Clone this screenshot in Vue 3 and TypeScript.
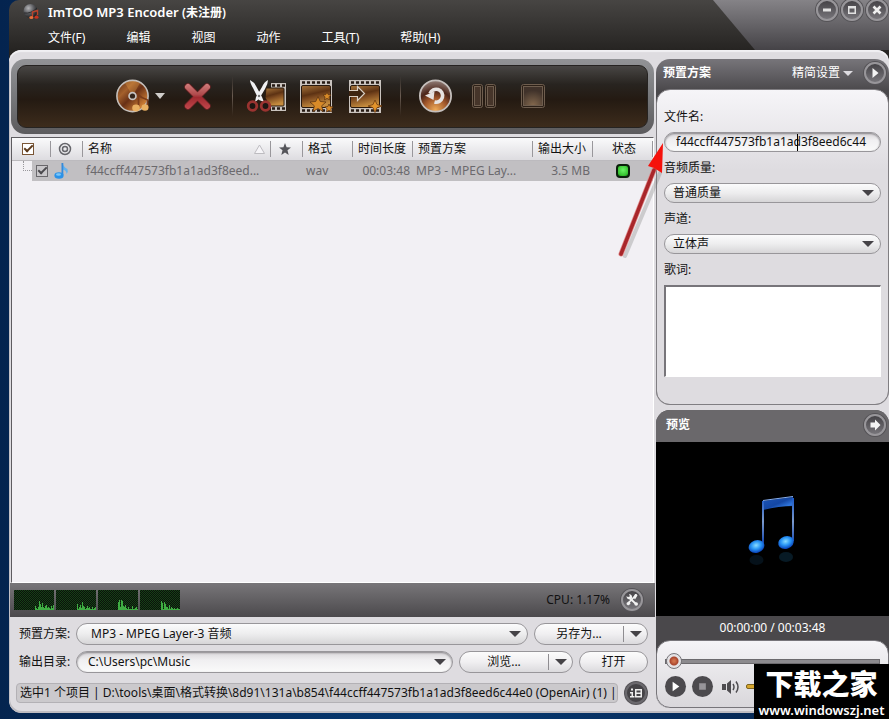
<script setup lang="ts">
import { ref } from 'vue'

interface MenuEntry { label: string }
interface Track {
  name: string
  format: string
  duration: string
  profile: string
  size: string
  checked: boolean
}

const menus: MenuEntry[] = [
  { label: '文件(F)' },
  { label: '编辑' },
  { label: '视图' },
  { label: '动作' },
  { label: '工具(T)' },
  { label: '帮助(H)' },
]

const tracks = ref<Track[]>([
  {
    name: 'f44ccff447573fb1a1ad3f8eed...',
    format: 'wav',
    duration: '00:03:48',
    profile: 'MP3 - MPEG Lay...',
    size: '3.5 MB',
    checked: true,
  },
])

const allChecked = ref(true)
const fileName = ref('f44ccff447573fb1a1ad3f8eed6c44')
const outputDir = ref('C:\\Users\\pc\\Music')
const lyrics = ref('')
const position = ref(0)
const volume = ref(60)
const statusText =
  '选中1 个项目 | D:\\tools\\桌面\\格式转换\\8d91\\131a\\b854\\f44ccff447573fb1a1ad3f8eed6c44e0 (OpenAir) (1) |'

const cpuCores: number[][] = [
  [0, 4, 2, 0, 3, 9, 6, 3, 7, 3, 2, 4, 5, 2, 3, 2, 1, 4, 2, 5],
  [0, 6, 1, 3, 5, 2, 8, 4, 3, 1, 2, 4, 2, 3, 1, 1, 3, 1, 2, 3],
  [8, 10, 3, 10, 9, 4, 3, 5, 2, 1, 3, 1, 1, 1, 4, 1, 1, 2, 3, 1],
  [0, 9, 7, 1, 8, 6, 3, 3, 1, 5, 1, 3, 2, 1, 2, 1, 1, 2, 1, 1],
]
</script>

<template>
  <div class="desktop">
    <div class="window">
      <header class="titlebar">
        <div class="title-row">
          <svg class="app-icon" viewBox="0 0 18 18" aria-hidden="true">
            <defs>
              <radialGradient id="ball" cx=".35" cy=".3" r=".8">
                <stop offset="0" stop-color="#b5b5b8" /><stop offset=".5" stop-color="#55565a" /><stop offset="1" stop-color="#111" />
              </radialGradient>
            </defs>
            <circle cx="7.500" cy="8" r="7" fill="url(#ball)" />
            <path d="M1 10 Q8 11 14 5" stroke="#222" fill="none" stroke-width=".8" />
            <path d="M9.500 14V9l5-1.500V12" stroke="#b8432b" stroke-width="1.400" fill="none" />
            <ellipse cx="8.300" cy="14.500" rx="2" ry="1.600" fill="#e8703a" /><ellipse cx="13.500" cy="14.200" rx="2" ry="1.600" fill="#c8321e" />
          </svg>
          <h1>ImTOO MP3 Encoder <small>(未注册)</small></h1>
          <div class="window-buttons">
            <button class="round" aria-label="最小化"><svg viewBox="0 0 22 22"><path d="M7 9.500h8v3H7z" fill="#e2e2e2" /></svg></button>
            <button class="round" aria-label="最大化"><svg viewBox="0 0 22 22"><path d="M7 7h8v8H7zM8.500 9.500v4h5v-4z" fill="#e2e2e2" fill-rule="evenodd" /></svg></button>
            <button class="round" aria-label="关闭"><svg viewBox="0 0 22 22"><path d="M7.500 7.500l7 7m0-7l-7 7" stroke="#efefef" stroke-width="2.600" /></svg></button>
          </div>
        </div>
        <nav class="menu">
          <button v-for="m in menus" :key="m.label">{{ m.label }}</button>
        </nav>
      </header>

      <div class="body">
        <main class="left">
          <div class="toolbar">
            <div class="toolbar-inner">
              <button class="tool" aria-label="添加文件">
                <svg width="36" height="36" viewBox="0 0 36 36">
                  <defs>
                    <linearGradient id="disc" x1="0" y1="0" x2="1" y2="1">
                      <stop offset="0" stop-color="#5a2c14" /><stop offset=".3" stop-color="#a4602c" /><stop offset=".5" stop-color="#683016" /><stop offset=".8" stop-color="#c97b34" /><stop offset="1" stop-color="#7a421f" />
                    </linearGradient>
                  </defs>
                  <circle cx="16.500" cy="18" r="15.600" fill="url(#disc)" stroke="#c4bfbb" stroke-width="1.600" />
                  <path d="M16.500 18L9 5Q16 1 24 5z" fill="#f0a850" opacity=".3" />
                  <circle cx="16.500" cy="18" r="4.300" fill="#c8c4c2" /><circle cx="16.500" cy="18" r="2.600" fill="#33251c" />
                  <path d="M22.500 29V17q3 3 7 4l2 1v8" fill="none" stroke="#7a3c1a" stroke-width="1.800" />
                  <ellipse cx="20" cy="30" rx="3.800" ry="3.400" fill="#e9b062" /><ellipse cx="29" cy="29.500" rx="3.500" ry="3.300" fill="#e9b062" />
                </svg>
              </button>
              <button class="tool-drop" aria-label="更多添加方式"><svg width="10" height="6" viewBox="0 0 10 6"><path d="M0 0h10L5 6z" fill="#d0cdca" /></svg></button>
              <button class="tool" aria-label="删除">
                <svg width="30" height="30" viewBox="0 0 30 30">
                  <defs><linearGradient id="del" x1="0" y1="0" x2="0" y2="30" gradientUnits="userSpaceOnUse"><stop offset="0" stop-color="#d88a88" /><stop offset=".45" stop-color="#b04a4c" /><stop offset=".55" stop-color="#a02a30" /><stop offset="1" stop-color="#c64c50" /></linearGradient></defs>
                  <path d="M6 6l19 19M25 6L6 25" stroke="#5d2020" stroke-width="7.500" stroke-linecap="round" />
                  <path d="M6 6l19 19M25 6L6 25" stroke="url(#del)" stroke-width="6" stroke-linecap="round" />
                </svg>
              </button>
              <span class="sep"></span>
              <button class="tool" aria-label="剪辑">
                <svg width="42" height="36" viewBox="0 0 42 36">
                  <defs>
                    <linearGradient id="film" x1="0" y1="0" x2=".3" y2="1">
                      <stop offset="0" stop-color="#a8763c" /><stop offset=".45" stop-color="#5d3213" /><stop offset=".6" stop-color="#7d4a20" /><stop offset="1" stop-color="#c58c3e" />
                    </linearGradient>
                  </defs>
                  <path d="M25 5h15v28H25z" fill="#c9c3be" />
                  <path d="M26 7.500h14M26 30.500h14" stroke="#251a13" stroke-width="2.600" stroke-dasharray="3 2" />
                  <path d="M20 10h17q1 0 1 1v16q0 1-1 1H24l-5-8z" fill="url(#film)" stroke="#291a0f" />
                  <path d="M4 2q4 2 6 6l6 11 2 5-5-2-6-12Q4 5 4 2zM22 2q0 4-3 9l-6 10-4 3 1-5 6-10Q18 4 22 2z" fill="#f0f0f2" />
                  <circle cx="13" cy="18" r="1.200" fill="#777" />
                  <circle cx="6.500" cy="28" r="4.300" fill="#1e1713" stroke="#9a3330" stroke-width="2.800" /><circle cx="19.500" cy="28" r="4.300" fill="#1e1713" stroke="#9a3330" stroke-width="2.800" />
                </svg>
              </button>
              <button class="tool" aria-label="特效">
                <svg width="36" height="36" viewBox="0 0 36 36">
                  <path d="M2 2h32v33H2z" fill="#c9c3be" />
                  <path d="M4 4.500h29M4 32.500h29" stroke="#251a13" stroke-width="2.600" stroke-dasharray="3 2" />
                  <rect x="3.500" y="7.500" width="29" height="22" rx="1.500" fill="url(#film)" stroke="#291a0f" />
                  <path d="M20 18.500l2.300 5 5.700.5-4.300 3.800 1.300 5.700-5-3-5 3 1.300-5.700L12 24l5.700-.5zM29 14l1.200 2.600 2.800.3-2 2 .5 3-2.500-1.500-2.500 1.500.5-3-2-2 2.800-.3zM31 26l1.200 2.600 2.800.3-2 2 .5 3-2.500-1.500-2.500 1.500.5-3-2-2 2.800-.3z" fill="#d98b28" stroke="#5d3412" stroke-width=".8" />
                </svg>
              </button>
              <button class="tool" aria-label="添加输出方案">
                <svg width="36" height="36" viewBox="0 0 36 36">
                  <path d="M2 2h32v33H2z" fill="#c9c3be" />
                  <path d="M4 4.500h29M4 32.500h29" stroke="#251a13" stroke-width="2.600" stroke-dasharray="3 2" />
                  <rect x="3.500" y="7.500" width="29" height="22" rx="1.500" fill="url(#film)" stroke="#291a0f" />
                  <path d="M2 12.500h8.500v-4l7 7-7 7v-4H2z" fill="#3d2411" />
                  <path d="M2 12.500h8.500v-4l7 7-7 7v-4H2" fill="none" stroke="#d9cfc4" stroke-width="1.200" />
                  <path d="M28 22l2 4.500 5 1.500-5 1.700-2 4.800-2-4.800-5-1.700 5-1.500z" fill="#e2942c" stroke="#6d3b10" stroke-width=".8" />
                </svg>
              </button>
              <span class="sep"></span>
              <button class="tool" aria-label="转换">
                <svg width="36" height="36" viewBox="0 0 36 36">
                  <defs><radialGradient id="conv" cx=".5" cy=".95" r=".95"><stop offset="0" stop-color="#f0ac58" /><stop offset=".4" stop-color="#a0562a" /><stop offset=".65" stop-color="#4c261a" /><stop offset="1" stop-color="#94807a" /></radialGradient></defs>
                  <circle cx="18.500" cy="18" r="15.600" fill="url(#conv)" stroke="#c4bebb" stroke-width="1.800" />
                  <path d="M13 15.500a6.500 6.500 0 1 1 4.500 8.500" fill="none" stroke="#e6e2e0" stroke-width="3.600" />
                  <path d="M8 17.500l9.500-4-1 8.500z" fill="#e6e2e0" />
                </svg>
              </button>
              <button class="tool" aria-label="暂停" disabled>
                <svg width="26" height="26" viewBox="0 0 26 26">
                  <g fill="#46352a" stroke="#6e5d4e"><rect x="1.500" y="1.500" width="10" height="23" rx="2" fill="#2c2017" /><rect x="3.500" y="3.500" width="6" height="19" /><rect x="14.500" y="1.500" width="10" height="23" rx="2" fill="#2c2017" /><rect x="16.500" y="3.500" width="6" height="19" /></g>
                </svg>
              </button>
              <button class="tool" aria-label="停止" disabled>
                <svg width="26" height="26" viewBox="0 0 26 26">
                  <defs><radialGradient id="stopg" cx=".5" cy="1" r=".8"><stop offset="0" stop-color="#84694e" /><stop offset="1" stop-color="#40322a" /></radialGradient></defs>
                  <rect x="1.500" y="1.500" width="23" height="23" rx="2" fill="#2c2017" stroke="#6e5d4e" /><rect x="3.500" y="3.500" width="19" height="19" fill="url(#stopg)" stroke="#6e5d4e" />
                </svg>
              </button>
            </div>
          </div>

          <div class="list">
            <table>
              <colgroup>
                <col class="c-check"><col class="c-icon"><col><col class="c-icon"><col class="c-format"><col class="c-time"><col class="c-profile"><col class="c-time"><col class="c-time">
              </colgroup>
              <thead>
                <tr>
                  <th class="head-check"><input v-model="allChecked" type="checkbox" aria-label="全选"></th>
                  <th class="glyph"><svg class="mid" width="14" height="14" viewBox="0 0 14 14" fill="none" stroke="#66666b"><circle cx="7" cy="7" r="5.500" stroke-width="1.500" /><circle cx="7" cy="7" r="2.500" stroke-width="1.500" /></svg></th>
                  <th><span class="name-head">名称<svg width="11" height="10" viewBox="0 0 11 10"><path d="M.5 9.500L5.500 1l5 8.500z" fill="#f6f5f8" stroke="#bdbcc0" /></svg></span></th>
                  <th class="glyph"><svg class="mid" width="12" height="12" viewBox="0 0 12 12"><path d="M6 0l1.600 4.200 4.400.2-3.500 2.800L9.700 12 6 9.400 2.300 12l1.200-4.800L0 4.400l4.400-.2z" fill="#55555a" /></svg></th>
                  <th>格式</th><th>时间长度</th><th>预置方案</th><th>输出大小</th><th class="center">状态</th>
                </tr>
              </thead>
              <tbody>
                <tr v-for="t in tracks" :key="t.name">
                  <td class="tree"><span class="branch"></span><span class="tree-box"><input v-model="t.checked" type="checkbox" aria-label="选择"></span></td>
                  <td class="note-cell"><svg width="16" height="18" viewBox="0 0 16 18"><path d="M8.500 1q1 4 5 6 1 3-1 5 0-4-4-4.500" fill="#64b3ef" /><path d="M7.500 1h1.800v12H7.500z" fill="#358ad9" /><ellipse cx="5" cy="13.500" rx="4.600" ry="3.300" fill="#2b92e8" /><ellipse cx="4.500" cy="12.500" rx="2.500" ry="1.300" fill="#7cc8fa" /></svg></td>
                  <td>{{ t.name }}</td>
                  <td></td>
                  <td>{{ t.format }}</td>
                  <td class="right">{{ t.duration }}</td>
                  <td>{{ t.profile }}</td>
                  <td class="right">{{ t.size }}</td>
                  <td class="center"><span class="led"></span></td>
                </tr>
              </tbody>
            </table>
          </div>

          <div class="cpu">
            <svg v-for="(core, i) in cpuCores" :key="i" width="40" height="20" viewBox="0 0 40 20">
              <defs><pattern :id="'grid' + i" width="2" height="2" patternUnits="userSpaceOnUse"><path d="M0 0h2v2H0z" fill="#0a120a" /><path d="M0 0h1v1H0zM1 1h1v1H1z" fill="#163f17" /></pattern></defs>
              <path d="M0 0h40v20H0z" :fill="'url(#grid' + i + ')'" />
              <rect v-for="(v, n) in core" :key="n" :x="20 + n" :y="20 - v" width="1" :height="v" fill="#3fae43" />
              <path d="M21 19.500h19" stroke="#3fae43" />
            </svg>
            <span class="cpu-text">CPU: 1.17%</span>
            <button class="round" aria-label="设置"><svg viewBox="0 0 22 22"><path d="M7.500 8l7.500 7M15 6l-9 9.500" stroke="#f2f2f2" stroke-width="1.800" /><path d="M5.500 7q0 3.500 4 3.500l1.500-1.500Q11.500 5.500 8 5l1 2.500-1.500 1z" fill="#f2f2f2" /><path d="M12.500 8.500L14 5h1.500l1 1.500-2.500 4zM5.500 14l3-2 1 3-2.500 1.500z" fill="#f2f2f2" /><circle cx="15.200" cy="15" r="1.800" fill="#f2f2f2" /></svg></button>
          </div>

          <div class="output">
            <div class="row">
              <label for="profile">预置方案:</label>
              <div class="combo wide">
                <select id="profile"><option>MP3 - MPEG Layer-3 音频</option></select>
                <span class="arrow"></span>
              </div>
              <div class="split">
                <button>另存为...</button><button class="split-drop" aria-label="另存为选项"><span class="arrow"></span></button>
              </div>
            </div>
            <div class="row">
              <label for="outdir">输出目录:</label>
              <div class="combo sunken">
                <input id="outdir" v-model="outputDir" type="text">
                <button class="combo-drop" aria-label="选择目录"><span class="arrow"></span></button>
              </div>
              <div class="split">
                <button>浏览...</button><button class="split-drop" aria-label="浏览选项"><span class="arrow"></span></button>
              </div>
              <button class="pill">打开</button>
            </div>
            <div class="status-row">
              <p class="status">{{ statusText }}</p>
              <button class="round dark" aria-label="日志"><svg viewBox="0 0 22 22" fill="#eee"><path d="M6 6.500h2v2H6zM5 10h3v4h1.500v1.500H5V14h1.500v-2.500H5z" /><path d="M10 7h7v8.500h-7zM11.500 8.500v2h4v-2zM11.500 12v2h4v-2z" fill-rule="evenodd" /></svg></button>
            </div>
          </div>
        </main>

        <aside class="side">
          <section class="settings">
            <header class="panel-head">
              <h2>预置方案</h2>
              <button class="mode">精简设置<span class="arrow light"></span></button>
              <button class="round" aria-label="展开"><svg viewBox="0 0 22 22"><path d="M8.500 6l6 5-6 5z" fill="#f4f4f4" /></svg></button>
            </header>
            <div class="fields">
              <label for="fname">文件名:</label>
              <div class="combo sunken field-name">
                <input id="fname" v-model="fileName" type="text">
                <span class="caret"></span>
              </div>
              <label for="quality">音频质量:</label>
              <div class="combo">
                <select id="quality"><option>普通质量</option></select><span class="arrow"></span>
              </div>
              <label for="channel">声道:</label>
              <div class="combo">
                <select id="channel"><option>立体声</option></select><span class="arrow"></span>
              </div>
              <label for="lyrics">歌词:</label>
              <textarea id="lyrics" v-model="lyrics"></textarea>
            </div>
          </section>

          <section class="preview">
            <header class="panel-head plain">
              <h2>预览</h2>
              <button class="round" aria-label="弹出预览"><svg viewBox="0 0 22 22"><path d="M6.500 8.500H11V5.500l5.500 5.500L11 16.500v-3H6.500z" fill="#f4f4f4" /></svg></button>
            </header>
            <div class="screen">
              <svg width="60" height="76" viewBox="-4 -4 60 76" aria-hidden="true">
                <defs>
                  <linearGradient id="beam" x1="0" y1="0" x2="1" y2="1"><stop offset="0" stop-color="#1d56b8" /><stop offset=".5" stop-color="#1447a4" /><stop offset=".75" stop-color="#2f76de" /><stop offset="1" stop-color="#0a2f86" /></linearGradient>
                  <linearGradient id="stem" x1="0" y1="0" x2="0" y2="1"><stop offset="0" stop-color="#1a58c6" /><stop offset=".5" stop-color="#7a99cc" /><stop offset="1" stop-color="#0c3fae" /></linearGradient>
                  <radialGradient id="head" cx=".5" cy=".4" r=".6"><stop offset="0" stop-color="#8adcff" /><stop offset=".5" stop-color="#2a97f6" /><stop offset="1" stop-color="#0840b6" /></radialGradient>
                </defs>
                <path d="M16 6l30-4v9q-14 0-30 4z" fill="url(#beam)" />
                <path d="M16 5.500l30-4" stroke="#85adf0" />
                <path d="M15 6h2v44h-2zM45 3h2v43h-2z" fill="url(#stem)" />
                <ellipse cx="9.500" cy="51.500" rx="8" ry="6.200" fill="url(#head)" transform="rotate(-18 9.500 51.500)" />
                <ellipse cx="39" cy="47.500" rx="8" ry="6.200" fill="url(#head)" transform="rotate(-18 39 47.500)" />
                <ellipse cx="9.500" cy="65" rx="7" ry="5" fill="#0a2233" opacity=".5" /><ellipse cx="39" cy="62" rx="7" ry="5" fill="#0c2b3e" opacity=".6" />
              </svg>
            </div>
            <p class="time">00:00:00 / 00:03:48</p>
            <div class="player-wrap">
              <div class="player">
                <input v-model="position" class="seek" type="range" min="0" max="228" aria-label="播放进度">
                <div class="player-row">
                  <button class="play" aria-label="播放"><svg viewBox="0 0 22 22"><path d="M8 6l7 5-7 5z" fill="#fff" /></svg></button>
                  <button class="play" aria-label="停止播放"><svg viewBox="0 0 22 22"><path d="M7.500 7.500h7v7h-7z" fill="#97959a" /></svg></button>
                  <button class="speaker" aria-label="静音"><svg width="18" height="16" viewBox="0 0 18 16"><path d="M0 5h4v6H0zM5 4.500L9 1v14l-4-3.500z" fill="#4e4c50" /><path d="M11 5q2 3 0 6M14 2.500q4 5.500 0 11" fill="none" stroke="#4e4c50" stroke-width="1.500" /></svg></button>
                  <input v-model="volume" class="volume" type="range" min="0" max="100" aria-label="音量">
                </div>
              </div>
            </div>
          </section>
        </aside>
      </div>
    </div>

    <svg class="pointer" width="52" height="120" viewBox="0 0 52 120" aria-hidden="true">
      <path d="M8 113L43 30" stroke="#777" stroke-width="4" opacity=".3" stroke-linecap="round" />
      <path d="M4 111L37 27" stroke="#e08a8a" stroke-width="5" stroke-linecap="round" />
      <path d="M4 111L37 27" stroke="#a8262a" stroke-width="3.500" stroke-linecap="round" />
      <path d="M46 0L31 23l6 2 8 5z" fill="#f5120c" />
    </svg>
    <div class="watermark"><strong>下载之家</strong><span>www.windowszj.net</span></div>
  </div>
</template>

<style>
body { margin: 0; background: #06224a; }
</style>

<style scoped>
* { box-sizing: border-box; }
.desktop {
  position: relative;
  display: flex;
  height: 100vh;
  min-height: 640px;
  padding: 0 0 6px 9px;
  overflow: hidden;
  background: linear-gradient(90deg, #04244f, #073a72 50%, #06224a);
  font: 12px/18px "Noto Sans", "Noto Sans CJK SC", sans-serif;
  color: #111;
}
button, input, select, textarea { font: inherit; color: inherit; margin: 0; padding: 0; }
button { border: 0; background: none; }
h1, h2, p { margin: 0; }
svg { display: block; flex: none; }

.window {
  flex: 1;
  min-width: 0;
  display: flex;
  flex-direction: column;
  background: linear-gradient(#474543, #262422 50px, #262422 80px, transparent 80px);
  border-radius: 10px 0 0 12px;
  overflow: hidden;
}
.titlebar { position: relative; height: 50px; color: #fff; flex: none; }
.titlebar::after {
  content: "";
  position: absolute;
  inset: 0 0 0 auto;
  width: 176px;
  background: linear-gradient(#858387, #454347);
  clip-path: polygon(0 0, 100% 0, 100% 100%, 42px 100%);
}
.title-row { display: flex; align-items: center; height: 24px; padding-left: 14px; }
.app-icon { width: 18px; height: 18px; }
h1 { flex: 1; margin-left: 7px; font-size: 13px; font-weight: 600; }
h1 small { font-size: 12px; }
.window-buttons { position: relative; z-index: 1; display: flex; gap: 3px; padding: 0 1px 4px 0; }
.round {
  flex: none;
  width: 22px;
  height: 22px;
  border: 2px solid #98969a;
  border-radius: 50%;
  background: linear-gradient(#454347, #77757a);
  box-shadow: 0 0 0 1px #555357;
}
.round svg { width: 22px; height: 22px; margin: -2px; }
.round.dark { background: #454347; border-color: #6b696e; }
.menu { display: flex; gap: 41px; padding: 5px 0 0 39px; }
.menu button { white-space: nowrap; }

.body {
  flex: 1;
  min-height: 0;
  display: flex;
  gap: 1px;
  background: #dedce0;
  border-radius: 12px 12px 0 12px;
  box-shadow: inset 0 2px 1px #f1f0f3, inset 1px -2px 0 #bebcc1;
}
.left { flex: 1; min-width: 0; display: flex; flex-direction: column; padding-left: 1px; }
.toolbar {
  margin: 9px 1px 3px;
  padding: 6px;
  height: 75px;
  border-radius: 14px;
  background: linear-gradient(#929396, #77787b 50%, #5c5b5d);
}
.toolbar-inner {
  display: flex;
  align-items: center;
  justify-content: center;
  height: 63px;
  padding: 0 0 2px 2px;
  border: 1px solid #262321;
  border-radius: 9px;
  background: linear-gradient(#484644, #282420 30%, #241a12 55%, #3d2c1c);
}
.tool { display: flex; align-items: center; justify-content: center; width: 49px; height: 48px; }
.tool-drop { width: 10px; margin: 0 8px 0 -4px; }
.sep { width: 1px; height: 40px; margin: 0 10px; background: linear-gradient(transparent, #6a5c52 50%, transparent); }

.list {
  flex: 1;
  min-height: 0;
  margin: 0 1px;
  border: 1px solid #5e5c60;
  border-right-color: #fff;
  border-bottom-color: #fff;
  background: #f2f0f4;
  overflow: hidden;
}
table { width: 100%; table-layout: fixed; border-collapse: collapse; }
.c-check { width: 39px; }
.c-icon { width: 32px; }
.c-format { width: 50px; }
.c-time { width: 60px; }
.c-profile { width: 120px; }
th, td { padding: 0 3px 0 5px; text-align: left; font-weight: 400; white-space: nowrap; overflow: hidden; }
th { height: 22px; border-bottom: 1px solid #bcbabe; }
th { background-image: linear-gradient(#99979b, #99979b), linear-gradient(#fafafb, #dddce0); background-size: 1px 16px, 100% 100%; background-position: right 3px, 0 0; background-repeat: no-repeat; }
th.glyph { padding: 0 5px 0 0; }
td { height: 20px; padding-left: 3px; background: #c1bfc2; color: #6b696d; }
.mid { margin: auto; }
.name-head { display: flex; align-items: center; justify-content: space-between; padding-right: 3px; }
.center { text-align: center; }
.right { text-align: right; }
th.head-check { padding-left: 10px; }
input[type="checkbox"] {
  appearance: none;
  display: block;
  width: 12px;
  height: 12px;
  border: 1px solid #7a5636;
  background: #fff;
}
input[type="checkbox"]:checked::after {
  content: "";
  display: block;
  width: 7px;
  height: 3px;
  margin: 1px;
  border: solid #5c3a1c;
  border-width: 0 0 2px 2px;
  transform: rotate(-45deg);
}
td input[type="checkbox"] { border-color: #69676b; background: #c9c7ca; }
td input[type="checkbox"]:checked::after { border-color: #4c4a4e; }
td.tree { padding: 0; background: none; }
.tree { display: flex; }
.branch { width: 9px; height: 10px; margin-left: 11px; border: dotted #99979b; border-width: 0 0 1px 1px; }
.tree-box { flex: 1; height: 20px; padding: 4px 0 0 4px; background: #c1bfc2; }
.led {
  display: block;
  width: 14px;
  height: 14px;
  margin: 0 auto;
  border: 2px solid #0b1f0b;
  border-radius: 4px;
  background: radial-gradient(circle at 50% 40%, #6bf266, #35c22f 70%, #145c12);
}

.cpu {
  display: flex;
  align-items: center;
  gap: 2px;
  height: 34px;
  padding: 0 12px 0 4px;
  background: linear-gradient(#787679, #4b494c);
}
.cpu-text { margin: 0 9px 0 auto; }

.output { padding: 6px 7px 9px 9px; display: flex; flex-direction: column; gap: 6px; }
.row { display: flex; gap: 6px; align-items: center; }
.row label { width: 51px; white-space: nowrap; }
.combo {
  position: relative;
  display: flex;
  align-items: center;
  flex: 1;
  min-width: 0;
  height: 22px;
  border: 1px solid #98969a;
  border-radius: 11px;
  background: linear-gradient(#fbfbfc, #ededee 50%, #d6d5d7);
}
.combo select, .combo input {
  appearance: none;
  flex: 1;
  min-width: 0;
  width: 100%;
  height: 18px;
  padding: 0 24px 0 8px;
  border: 0;
  outline: 0;
  background: none;
}
.combo.wide select { padding-left: 14px; }
.combo input { padding: 0 0 0 11px; }
.combo > .arrow { position: absolute; right: 6px; pointer-events: none; }
.sunken { background: linear-gradient(#d9d7da, #f0eff1 40%, #fafafa); box-shadow: inset 0 1px 2px #88868a; }
.combo-drop { padding: 0 6px; }
.arrow {
  display: block;
  border: solid transparent;
  border-width: 6px 6px 0;
  border-top-color: #454347;
}
.split, .pill {
  display: flex;
  flex: none;
  height: 22px;
  border: 1px solid #98969a;
  border-radius: 11px;
  background: linear-gradient(#fcfcfc, #f0eff1 50%, #dbdadd);
}
.split { width: 114px; }
.split button:first-child { flex: 1; }
.split-drop { display: flex; align-items: center; justify-content: center; width: 24px; margin: 2px 0; border-left: 1px solid #8f8d91; }
.pill { width: 69px; align-items: center; justify-content: center; }
.status-row { display: flex; align-items: center; gap: 7px; margin: 3px 1px 0 -3px; }
.status {
  flex: 1;
  min-width: 0;
  height: 20px;
  padding-left: 3px;
  overflow: hidden;
  white-space: nowrap;
  border: 1px solid #b3b1b5;
  border-radius: 4px;
  background: #cbc9cc;
}

.side { width: 233px; flex: none; display: flex; flex-direction: column; gap: 5px; padding: 9px 0 5px; }
.settings {
  border-radius: 14px;
  background: linear-gradient(#77757a, #4a484b 32px, #4a484b 60px, #8a888c 60px);
}
.panel-head { display: flex; align-items: center; height: 30px; padding: 0 3px 2px 7px; color: #fff; }
.panel-head h2 { flex: 1; font-size: 12px; font-weight: 600; }
.mode { display: flex; align-items: center; gap: 3px; margin-right: 11px; }
.arrow.light { border-width: 5px 5px 0; border-top-color: #dddbe0; }
.fields {
  display: flex;
  flex-direction: column;
  padding: 18px 7px 27px;
  border: 1px solid #807e82;
  border-radius: 14px;
  background: linear-gradient(#f6f5f8, #dedce0 80px);
}
.fields label { margin-bottom: 6px; height: 18px; }
.fields .combo { flex: none; height: 20px; margin-bottom: 7px; }
.caret { position: absolute; left: 132px; top: 1px; width: 1px; height: 17px; background: #000; }
textarea { height: 92px; resize: none; border: 2px solid; border-width: 2px 1px 1px 2px; border-color: #77757a #fff #fff #77757a; background: #fff; }

.preview { flex: 1; min-height: 0; display: flex; flex-direction: column; background: #4a484b; border-radius: 14px; overflow: hidden; }
.panel-head.plain { height: 32px; padding-left: 10px; background: #6a686b; }
.screen { flex: 1; min-height: 0; display: flex; align-items: center; justify-content: center; background: #000; }
.time { height: 24px; line-height: 24px; text-align: center; color: #fff; }
.player {
  display: flex;
  flex-direction: column;
  gap: 7px;
  height: 68px;
  padding: 12px 8px 0;
  border: 1px solid #77757a;
  border-radius: 14px;
  background: linear-gradient(#f5f4f7, #d9d7db);
}
.player-wrap { background: linear-gradient(#4a484b 30px, #dedce0 30px); }
input[type="range"] { appearance: none; background: none; height: 16px; width: 100%; }
.seek::-webkit-slider-runnable-track { height: 5px; background: #8c8a8e; border: 1px solid #6c6a6e; }
.seek::-webkit-slider-thumb {
  appearance: none;
  width: 16px;
  height: 16px;
  margin-top: -7px;
  border: 1px solid #77757a;
  border-radius: 50%;
  background: radial-gradient(circle, #d0714b 1px, #a8442d 4px, #e4e2e5 5px);
}
.player-row { display: flex; align-items: center; gap: 6px; }
.play { width: 21px; height: 21px; border-radius: 50%; background: #4c4a4e; flex: none; }
.play svg { width: 21px; height: 21px; }
.speaker { margin-left: 3px; }
.player-row .volume { flex: 1; min-width: 0; }
.volume::-webkit-slider-runnable-track { height: 5px; border: 1px solid #7d6420; background: #d8a72e; border-radius: 2px; }
.volume::-webkit-slider-thumb { appearance: none; width: 12px; height: 12px; margin-top: -5px; border: 1px solid #77757a; border-radius: 50%; background: #eee; }

.pointer { position: absolute; left: 617px; top: 143px; pointer-events: none; }
.watermark {
  position: absolute;
  right: 0;
  bottom: 0;
  display: flex;
  flex-direction: column;
  align-items: center;
  width: 135px;
  height: 55px;
  background: #000;
  color: #fff;
}
.watermark strong { font: 900 28px/38px "Noto Sans CJK SC", sans-serif; }
.watermark span { font-size: 13px; font-weight: 600; line-height: 16px; }
</style>
